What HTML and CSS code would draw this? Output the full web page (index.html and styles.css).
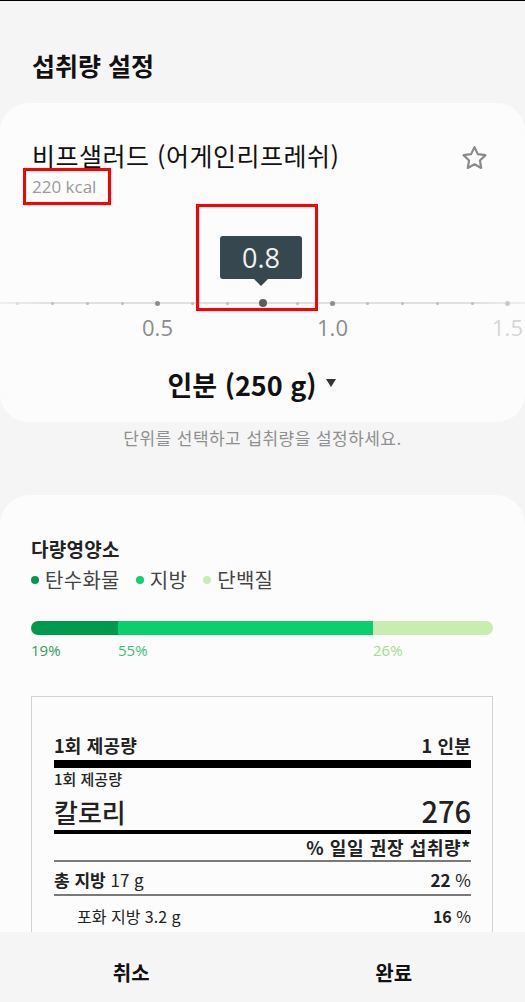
FILE: index.html
```html
<!DOCTYPE html>
<html lang="ko">
<head>
<meta charset="utf-8">
<link rel="stylesheet" href="styles.css">
</head>
<body>
<div class="screen">
  <main class="content">
    <h1 class="title">섭취량 설정</h1>

    <section class="card amount-card">
      <div class="food-head">
        <div class="food-text">
          <div class="food-name">비프샐러드 (어게인리프레쉬)</div>
          <div class="food-kcal">220 kcal</div>
        </div>
        <svg class="star" viewBox="0 0 24 24" width="31" height="31" aria-hidden="true">
          <path d="M12 3.2l2.6 5.4 5.9.8-4.3 4.1 1 5.8L12 16.5l-5.2 2.8 1-5.8-4.3-4.1 5.9-.8z" fill="none" stroke="#8a8a8a" stroke-width="1.7" stroke-linejoin="round"/>
        </svg>
      </div>

      <div class="slider">
        <div class="tooltip"><span>0.8</span></div>
        <div class="ticks">
          <span class="tick fade"></span>
          <span class="tick"></span>
          <span class="tick"></span>
          <span class="tick"></span>
          <span class="tick major"></span>
          <span class="tick"></span>
          <span class="tick"></span>
          <span class="tick current"></span>
          <span class="tick"></span>
          <span class="tick major"></span>
          <span class="tick"></span>
          <span class="tick"></span>
          <span class="tick"></span>
          <span class="tick"></span>
          <span class="tick major fade"></span>
        </div>
        <div class="scale">
          <span></span><span></span><span></span><span></span>
          <span class="lbl">0.5</span>
          <span></span><span></span><span></span><span></span>
          <span class="lbl">1.0</span>
          <span></span><span></span><span></span><span></span>
          <span class="lbl faint">1.5</span>
        </div>
      </div>

      <div class="unit">인분 (250 g) <span class="caret"></span></div>

      <div class="mark mark-kcal"></div>
      <div class="mark mark-value"></div>
    </section>

    <p class="hint">단위를 선택하고 섭취량을 설정하세요.</p>

    <section class="card nutri-card">
      <h2 class="macro-title">다량영양소</h2>
      <div class="legend">
        <span class="leg"><i class="dot carb"></i>탄수화물</span>
        <span class="leg"><i class="dot fat"></i>지방</span>
        <span class="leg"><i class="dot prot"></i>단백질</span>
      </div>
      <div class="bar">
        <span class="seg carb"></span>
        <span class="seg fat"></span>
        <span class="seg prot"></span>
      </div>
      <div class="pcts">
        <span class="p-carb">19%</span>
        <span class="p-fat">55%</span>
        <span class="p-prot">26%</span>
      </div>

      <div class="facts">
        <div class="row serving"><span>1회 제공량</span><span>1 인분</span></div>
        <div class="rule thick"></div>
        <div class="small-label">1회 제공량</div>
        <div class="row calories"><span>칼로리</span><span class="num">276</span></div>
        <div class="rule medium"></div>
        <div class="dv">% 일일 권장 섭취량*</div>
        <div class="rule thin"></div>
        <div class="row item"><span><b>총 지방</b> 17 g</span><span><b>22</b> %</span></div>
        <div class="rule thin"></div>
        <div class="row item sub"><span>포화 지방 3.2 g</span><span><b>16</b> %</span></div>
      </div>
    </section>
  </main>

  <footer class="actions">
    <button class="btn">취소</button>
    <button class="btn">완료</button>
  </footer>
</div>
</body>
</html>
```

FILE: styles.css
```css
* { box-sizing: border-box; }

html, body {
  margin: 0;
  padding: 0;
}

body {
  width: 525px;
  height: 1002px;
  overflow: hidden;
  background: #f5f5f5;
  font-family: "Noto Sans CJK KR", "Noto Sans", sans-serif;
  color: #111;
}

.screen {
  height: 1002px;
  display: flex;
  flex-direction: column;
  border-top: 1px solid #000;
}

.content {
  flex: 1;
  overflow: hidden;
}

.title {
  margin: 0;
  padding: 48px 0 0 32px;
  font-size: 25px;
  line-height: 32px;
  font-weight: 700;
  letter-spacing: 0;
}

.card {
  background: #fcfcfc;
  border-radius: 28px;
}

.amount-card {
  position: relative;
  margin-top: 22px;
  height: 319px;
  overflow: hidden;
  padding-top: 36px;
}

.food-head {
  display: flex;
  justify-content: space-between;
  align-items: flex-start;
  padding: 0 35px 0 32px;
}

.food-name {
  font-size: 25px;
  line-height: 32px;
  font-weight: 400;
  letter-spacing: 0.5px;
  color: #111;
}

.food-kcal {
  margin-top: 4px;
  font-size: 17px;
  line-height: 24px;
  color: #9a9a9a;
  font-family: "Open Sans", "Noto Sans CJK KR", sans-serif;
}

.star {
  margin-top: 4px;
}

.slider {
  position: relative;
  height: 142px;
  margin-top: 1px;
}

.tooltip {
  position: absolute;
  left: 220px;
  top: 36px;
  width: 82px;
  height: 43px;
  background: #37474f;
  border-radius: 3px;
  display: flex;
  justify-content: center;
  align-items: center;
}

.tooltip span {
  color: #f2f2f2;
  font-family: "Open Sans", sans-serif;
  font-size: 27px;
  line-height: 1;
}

.tooltip::after {
  content: "";
  position: absolute;
  left: 50%;
  bottom: -7px;
  margin-left: -7px;
  border-left: 7px solid transparent;
  border-right: 7px solid transparent;
  border-top: 7px solid #37474f;
}

.ticks {
  position: absolute;
  left: 0;
  right: 0;
  top: 98px;
  height: 10px;
  display: grid;
  grid-template-columns: repeat(15, 35px);
  align-items: center;
  justify-items: center;
}

.ticks::before {
  content: "";
  position: absolute;
  left: 0;
  right: 0;
  top: 4px;
  height: 2px;
  background: linear-gradient(to right, #f0f0f0, #e0e0e0 10%, #e0e0e0 90%, #f0f0f0);
}

.tick {
  position: relative;
  width: 3px;
  height: 3px;
  border-radius: 50%;
  background: #bdbdbd;
}

.tick.major {
  width: 5px;
  height: 5px;
  background: #8e8e8e;
}

.tick.current {
  width: 8px;
  height: 8px;
  background: #5d5d5d;
}

.tick.fade {
  background: #dcdcdc;
}

.tick.major.fade {
  background: #c8c8c8;
}

.scale {
  position: absolute;
  left: 0;
  top: 112px;
  display: grid;
  grid-template-columns: repeat(15, 35px);
  justify-items: center;
}

.lbl {
  font-family: "Open Sans", sans-serif;
  font-size: 22px;
  line-height: 30px;
  color: #8c8c8c;
  white-space: nowrap;
}

.lbl.faint {
  color: #d6d6d6;
}

.unit {
  display: flex;
  justify-content: center;
  align-items: center;
  gap: 9px;
  margin-top: 26px;
  padding-right: 22px;
  font-size: 27px;
  line-height: 34px;
  font-weight: 700;
  letter-spacing: 0;
}

.caret {
  width: 0;
  height: 0;
  border-left: 5px solid transparent;
  border-right: 5px solid transparent;
  border-top: 8px solid #333;
  margin-top: -4px;
}

.mark {
  position: absolute;
  border: 3px solid #ff0000;
  pointer-events: none;
}

.mark-kcal {
  left: 23px;
  top: 65px;
  width: 88px;
  height: 37px;
}

.mark-value {
  left: 196px;
  top: 101px;
  width: 122px;
  height: 107px;
}

.hint {
  margin: 5px 0 0;
  text-align: center;
  font-size: 17px;
  line-height: 22px;
  color: #8f8f8f;
  letter-spacing: 0.45px;
}

.nutri-card {
  margin-top: 46px;
  padding: 42px 32px 0 31px;
  min-height: 520px;
  border-radius: 30px 30px 0 0;
}

.macro-title {
  margin: 0;
  font-size: 19px;
  line-height: 24px;
  font-weight: 700;
  color: #222;
  letter-spacing: 0.3px;
}

.legend {
  margin-top: 6px;
  display: flex;
  gap: 16px;
  font-size: 20px;
  line-height: 26px;
  color: #444;
  letter-spacing: 0.3px;
}

.leg {
  display: flex;
  align-items: center;
  gap: 6px;
}

.dot {
  width: 8px;
  height: 8px;
  border-radius: 50%;
}

.dot.carb, .seg.carb { background: #009a4f; }
.dot.fat, .seg.fat { background: #0bcf6a; }
.dot.prot, .seg.prot { background: #c9edb1; }

.bar {
  margin-top: 28px;
  width: 462px;
  height: 14px;
  border-radius: 7px;
  overflow: hidden;
  display: grid;
  grid-template-columns: 87px 255px 120px;
}

.pcts {
  margin-top: 5px;
  width: 462px;
  display: grid;
  grid-template-columns: 87px 255px 120px;
  font-family: "Open Sans", sans-serif;
  font-size: 15px;
  line-height: 20px;
}

.p-carb { color: #2f9c5d; }
.p-fat { color: #3cbf78; }
.p-prot { color: #a3dc90; }

.facts {
  margin-top: 36px;
  width: 462px;
  border: 1px solid #d2d2d2;
  border-bottom: none;
  padding: 36px 21px 40px 22px;
}

.row {
  display: flex;
  justify-content: space-between;
  align-items: baseline;
}

.serving {
  font-size: 18px;
  line-height: 24px;
  font-weight: 700;
  color: #222;
  letter-spacing: 0.2px;
}

.rule {
  background: #000;
}

.rule.thick {
  margin-top: 3px;
  height: 8px;
}

.small-label {
  margin-top: 2px;
  font-size: 15px;
  line-height: 18px;
  font-weight: 500;
  color: #222;
}

.calories {
  margin-top: 6px;
  font-size: 26px;
  line-height: 32px;
  font-weight: 500;
  color: #222;
}

.calories .num {
  font-size: 29px;
}

.rule.medium {
  margin-top: 2px;
  height: 4px;
}

.dv {
  margin-top: 2px;
  text-align: right;
  font-size: 18px;
  line-height: 22px;
  font-weight: 700;
  color: #222;
  letter-spacing: 0.6px;
}

.rule.thin {
  margin-top: 2px;
  height: 2px;
  background: #7a7a7a;
}

.item {
  margin-top: 6px;
  font-size: 17px;
  line-height: 24px;
  color: #222;
}

.item b { font-weight: 700; }

.item.sub {
  margin-top: 9px;
  padding-left: 23px;
  font-size: 16px;
  line-height: 22px;
}

.actions {
  height: 70px;
  flex: none;
  background: #f5f5f5;
  display: grid;
  grid-template-columns: 1fr 1fr;
}

.btn {
  border: none;
  background: transparent;
  padding: 27px 0 0;
  align-self: start;
  font-family: "Noto Sans CJK KR", sans-serif;
  font-size: 20px;
  line-height: 28px;
  font-weight: 700;
  color: #111;
}
```
